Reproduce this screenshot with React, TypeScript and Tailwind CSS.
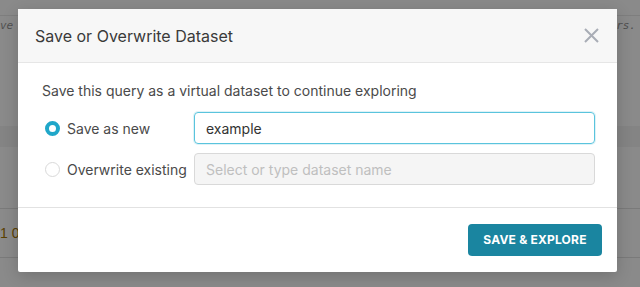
import React, { useState } from 'react';

const SaveDatasetModal: React.FC = () => {
  const [mode, setMode] = useState<'new' | 'overwrite'>('new');
  const [name, setName] = useState('example');

  return (
    <div className="absolute left-[18px] top-[9px] w-[599px] h-[263px] bg-white rounded-[2px] shadow-[0_4px_16px_rgba(0,0,0,0.18)] flex flex-col">
      <div className="h-[54px] bg-[#f7f7f7] border-b border-[#e6e6e6] flex items-center justify-between pl-[17px] pr-[18px]">
        <h3 className="text-[16px] text-[#3a3a3a]">Save or Overwrite Dataset</h3>
        <button className="w-[16px] h-[16px] flex items-center justify-center text-[#a9adb6]">
          <svg width="15" height="15" viewBox="0 0 15 15" fill="none" stroke="currentColor" strokeWidth="2">
            <path d="M1 1L14 14M14 1L1 14" />
          </svg>
        </button>
      </div>

      <div className="flex-1 pl-[24px] pr-[22px] pt-[18px] border-b border-[#e2e2e2]">
        <p className="text-[14px] text-[#4a4a4a] leading-[20px] mb-[11px]">
          Save this query as a virtual dataset to continue exploring
        </p>
        <div className="flex flex-col gap-[9px]">
          <div className="flex items-center">
            <label className="w-[152px] shrink-0 flex items-center gap-[7px] text-[14px] text-[#4a4a4a] cursor-pointer" onClick={() => setMode('new')}>
              <span className={`w-[15px] h-[15px] rounded-full ${mode === 'new' ? 'border-[4px] border-[#20a7c9]' : 'border border-[#d9d9d9]'} bg-white ml-[3px]`} />
              Save as new
            </label>
            <input
              value={name}
              onChange={(e) => setName(e.target.value)}
              className="flex-1 min-w-0 h-[32px] rounded-[4px] border border-[#5ac4dd] px-[11px] text-[14px] text-[#333] outline-none shadow-[0_0_0_1px_rgba(32,167,201,0.15)]"
            />
          </div>
          <div className="flex items-center">
            <label className="w-[152px] shrink-0 flex items-center gap-[7px] text-[14px] text-[#4a4a4a] cursor-pointer" onClick={() => setMode('overwrite')}>
              <span className={`w-[15px] h-[15px] rounded-full ${mode === 'overwrite' ? 'border-[4px] border-[#20a7c9]' : 'border border-[#d9d9d9]'} bg-white ml-[3px]`} />
              Overwrite existing
            </label>
            <input
              disabled
              placeholder="Select or type dataset name"
              className="flex-1 min-w-0 h-[32px] rounded-[4px] border border-[#d9d9d9] bg-[#f5f5f5] px-[11px] text-[14px] placeholder:text-[#bfbfbf] outline-none"
            />
          </div>
        </div>
      </div>

      <div className="h-[64px] flex items-center justify-end pr-[15px]">
        <button className="w-[134px] h-[32px] rounded-[4px] bg-[#1a85a0] text-white text-[12px] font-bold tracking-[0.2px]">
          SAVE &amp; EXPLORE
        </button>
      </div>
    </div>
  );
};

const App: React.FC = () => {
  return (
    <div className="relative w-[640px] h-[287px] overflow-hidden bg-[#8a8a8a] font-['Inter',sans-serif]">
      <div className="flex flex-col">
        <div className="h-[16px] border-b border-[#7e7e7e]" />
        <div className="h-[20px] flex items-center justify-between font-['DejaVu_Sans_Mono',monospace] italic text-[11px] text-[#505050]">
          <span>ve</span>
          <span className="mr-[4px]">rs.</span>
        </div>
        <div className="h-[90px]" />
        <div className="h-[21px] bg-[#848484]" />
        <div className="h-[62px] border-b border-[#7a7a7a]" />
        <div className="h-[49px] flex items-center border-b border-[#7a7a7a] text-[14px] text-[#5a4000] font-['Liberation_Sans',sans-serif]">
          <span>1 00</span>
        </div>
      </div>
      <SaveDatasetModal />
    </div>
  );
};

export default App;
